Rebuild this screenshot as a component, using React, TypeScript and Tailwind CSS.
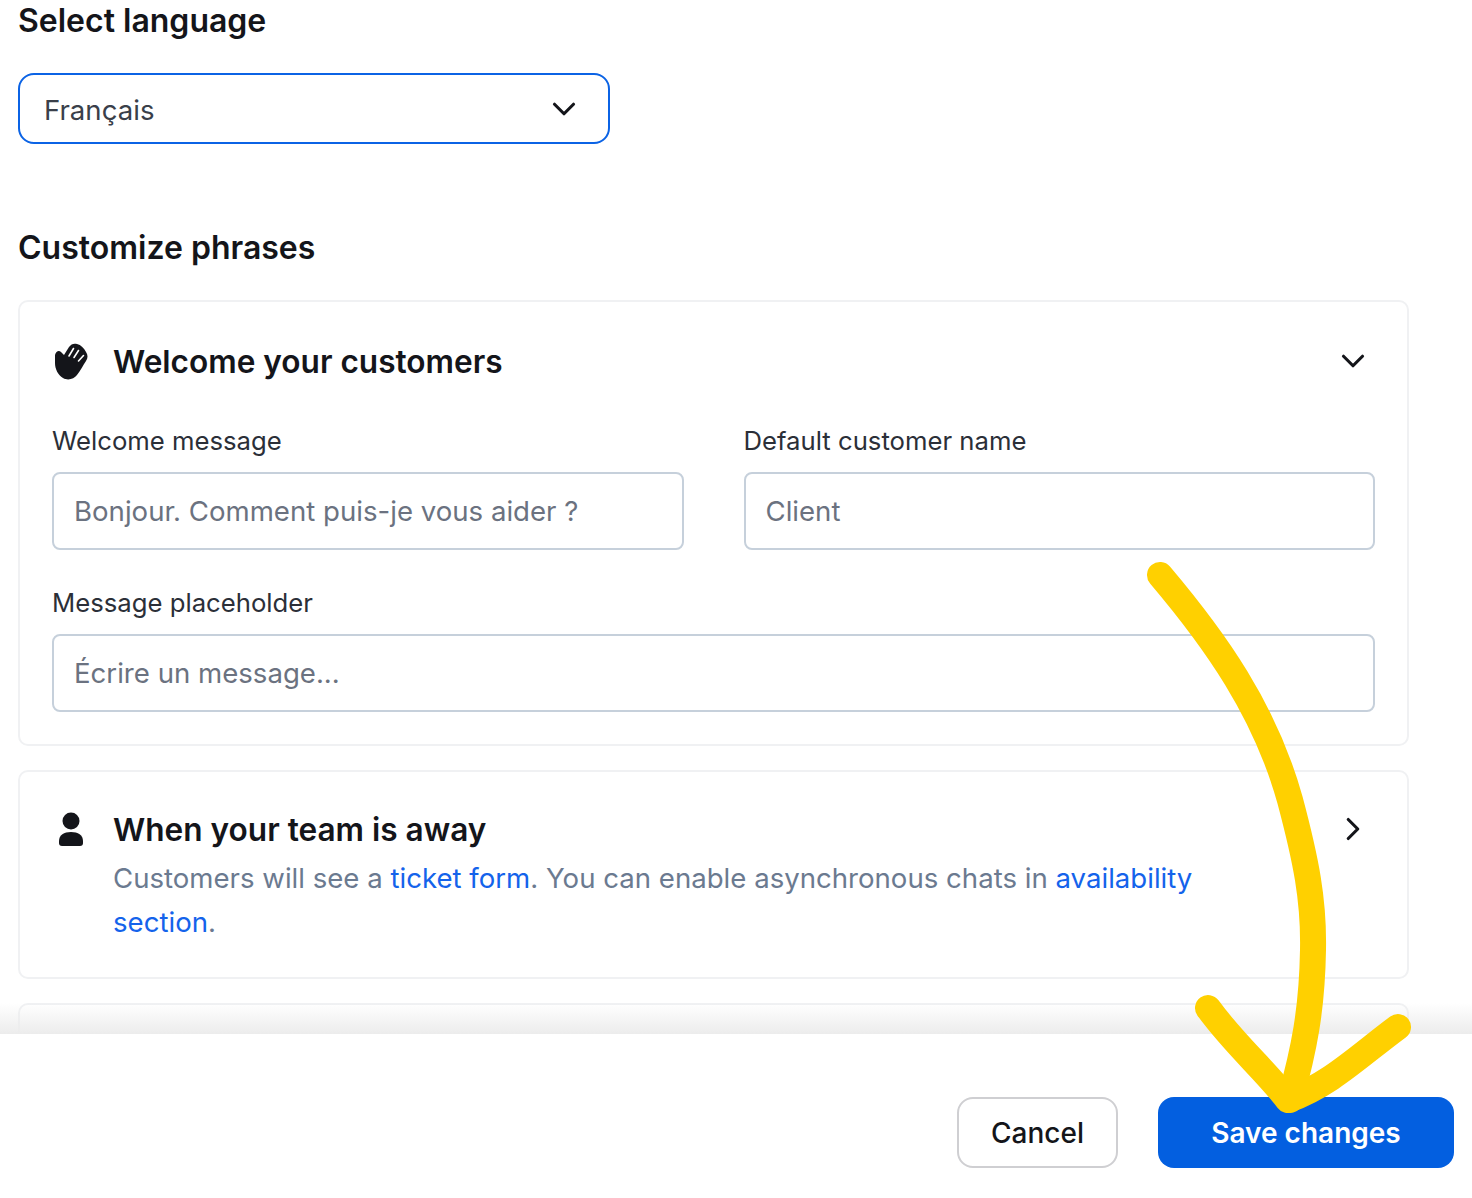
import React from 'react';
import { ChevronDown, ChevronRight } from 'lucide-react';

function Field({ label, value }: { label: string; value: string }) {
  return (
    <div className="flex-1 min-w-0">
      <div className="h-[32px] leading-[32px] text-[25.7px] text-[#2b2f38] mb-[15px]">{label}</div>
      <div className="h-[78px] flex items-center pl-[20px] pr-[20px] pt-[2px] border-2 border-[#c6d0db] rounded-[8px] text-[27.6px] text-[#6b7280]">
        {value}
      </div>
    </div>
  );
}

function WaveIcon() {
  return (
    <svg width="36" height="38" viewBox="0 0 36 38" className="shrink-0" fill="none">
      <path
        d="M1 12C2 8 5 7 7 9L10 12L15 4C17 1 20 0 23 1C27 2 30 5 32 9C34 12 34 15 32 18C29 22 27 27 23 32C20 36 14 38 9 35C4 32 1 26 1 20Z"
        fill="#14151a"
      />
      <path d="M19.5 5.5L15 13M24.5 7.5L20 14.5M29.5 12.5L24.5 18" stroke="#ffffff" strokeWidth="1.6" strokeLinecap="round" />
    </svg>
  );
}

function PersonIcon() {
  return (
    <svg width="26" height="36" viewBox="0 0 26 36" className="shrink-0" fill="#14151a">
      <circle cx="13" cy="10" r="8.5" />
      <path d="M1 30C1 24 6 21 13 21C20 21 25 24 25 30V32C25 34 24 35 22 35H4C2 35 1 34 1 32Z" />
    </svg>
  );
}

export default function App() {
  return (
    <div className="relative h-[1198px] w-[1472px] overflow-hidden bg-white font-['Inter',sans-serif]">
      <div className="w-[1409px] pl-[18px]">
        <h2 className="h-[40px] pt-[1px] leading-[40px] text-[32px] font-semibold text-[#14151a]">Select language</h2>

        <div className="mt-[33px] w-[592px] h-[71px] flex items-center justify-between pl-[24px] pr-[25px] border-2 border-[#0b63e5] rounded-[16px] text-[27.6px] text-[#3a3f4a]">
          <span className="mt-[4px]">Français</span>
          <ChevronDown size={38} strokeWidth={2} className="text-[#14151a]" />
        </div>

        <h2 className="mt-[83px] h-[40px] pt-[1px] leading-[40px] text-[32px] font-semibold text-[#14151a]">Customize phrases</h2>

        {/* Welcome card */}
        <section className="mt-[33px] h-[446px] border-2 border-[#f0f1f3] rounded-[10px] pl-[32px] pr-[32px] pt-[40px]">
          <div className="flex items-center h-[40px]">
            <div className="w-[61px] pl-[2px]">
              <WaveIcon />
            </div>
            <span className="flex-1 text-[31.6px] font-semibold text-[#14151a]">Welcome your customers</span>
            <ChevronDown size={38} strokeWidth={2} className="text-[#14151a] mr-[3px] mb-[2px]" />
          </div>
          <div className="mt-[43px] flex gap-[60px]">
            <Field label="Welcome message" value="Bonjour. Comment puis-je vous aider ?" />
            <Field label="Default customer name" value="Client" />
          </div>
          <div className="mt-[37px]">
            <Field label="Message placeholder" value="Écrire un message..." />
          </div>
        </section>

        {/* Away card */}
        <section className="mt-[24px] h-[209px] border-2 border-[#f0f1f3] rounded-[10px] pl-[32px] pr-[32px] pt-[38px] flex">
          <div className="w-[61px] pl-[6px] pt-[1px]">
            <PersonIcon />
          </div>
          <div className="flex-1">
            <div className="flex items-center justify-between h-[40px]">
              <span className="text-[31.6px] font-semibold text-[#14151a]">When your team is away</span>
              <ChevronRight size={38} strokeWidth={2} className="text-[#14151a] mr-[3px] mb-[2px]" />
            </div>
            <p className="mt-[6px] w-[1100px] text-[27.6px] leading-[44px] text-[#6b7a90]">
              Customers will see a <span className="text-[#1463eb]">ticket form</span>. You can enable asynchronous chats in{' '}
              <span className="text-[#1463eb]">availability</span> <span className="text-[#1463eb]">section</span>.
            </p>
          </div>
        </section>

        {/* Next card, cut off by the footer */}
        <section className="mt-[24px] h-[120px] border-2 border-[#f0f1f3] rounded-[10px]" />
      </div>

      {/* Sticky footer */}
      <div className="absolute inset-x-0 top-[1003px] h-[31px] bg-gradient-to-b from-white/0 to-[#ececec]" />
      <footer className="absolute inset-x-0 top-[1034px] bottom-0 bg-white flex justify-end gap-[40px] pt-[63px] pr-[18px]">
        <button className="w-[161px] h-[71px] border-2 border-[#cfcfd2] rounded-[16px] text-[28px] font-medium text-[#14151a]">
          Cancel
        </button>
        <button className="w-[296px] h-[71px] bg-[#035fe0] rounded-[16px] text-[28px] font-semibold text-white">
          Save changes
        </button>
      </footer>

      {/* Hand-drawn arrow annotation */}
      <svg className="absolute inset-0 pointer-events-none" width="1472" height="1198" viewBox="0 0 1472 1198" fill="none" stroke="#ffd000" strokeLinecap="round" strokeLinejoin="round">
        <path d="M1160 575C1215 640 1265 710 1290 800C1306 860 1314 900 1313 950C1312 1010 1304 1050 1290 1100" strokeWidth="26" />
        <path d="M1208 1008C1235 1045 1265 1070 1288 1100C1330 1085 1360 1055 1398 1027" strokeWidth="26" />
      </svg>
    </div>
  );
}
